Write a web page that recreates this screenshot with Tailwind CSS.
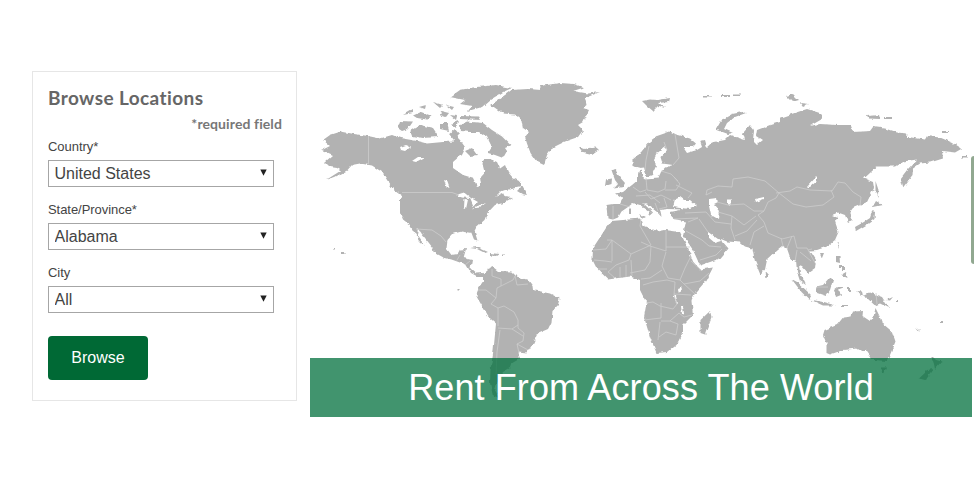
<!DOCTYPE html>
<html lang="en">
<head>
  <meta charset="UTF-8">
  <meta name="viewport" content="width=device-width, initial-scale=1.0">
  <title>Browse Locations</title>
  <script src="https://cdn.jsdelivr.net/npm/@tailwindcss/browser@4"></script>
</head>
<body class="bg-white h-[500px] overflow-hidden relative font-['Liberation_Sans',sans-serif] text-[#444]">

  <main class="flex items-start pl-8 pt-[71px]">

    <!-- Search form -->
    <form class="w-[265px] h-[330px] shrink-0 border border-[#e6e6e6] pl-[15px] pr-[14px] pt-[15px]">
      <h2 class="font-['Lato',sans-serif] font-bold text-[19px] leading-[22px] tracking-[0.4px] text-[#666] whitespace-nowrap">Browse Locations</h2>
      <p class="font-['Lato',sans-serif] font-bold text-[14px] leading-[18px] tracking-[0.1px] mt-1.5 text-right text-[#777]">*required field</p>

      <label for="country" class="block text-[13px] leading-4 tracking-[-0.05px] mt-[6px]">Country*</label>
      <div class="relative w-[226px] mt-[5px]">
        <select id="country" class="block appearance-none w-full h-[27px] border border-[#a6a6a6] bg-white pl-[5.5px] text-base leading-[25px]">
          <option>United States</option>
        </select>
        <svg class="absolute right-[7px] top-[9px]" width="7" height="7" viewBox="0 0 7 7" fill="#222"><path d="M0.3 0.5h6.4L3.5 6.8z"/></svg>
      </div>

      <label for="state" class="block text-[13px] leading-4 tracking-[-0.05px] mt-[15px]">State/Province*</label>
      <div class="relative w-[226px] mt-[5px]">
        <select id="state" class="block appearance-none w-full h-[27px] border border-[#a6a6a6] bg-white pl-[5.5px] text-base leading-[25px]">
          <option>Alabama</option>
        </select>
        <svg class="absolute right-[7px] top-[9px]" width="7" height="7" viewBox="0 0 7 7" fill="#222"><path d="M0.3 0.5h6.4L3.5 6.8z"/></svg>
      </div>

      <label for="city" class="block text-[13px] leading-4 tracking-[-0.05px] mt-[15px]">City</label>
      <div class="relative w-[226px] mt-[5px]">
        <select id="city" class="block appearance-none w-full h-[27px] border border-[#a6a6a6] bg-white pl-[5.5px] text-base leading-[25px]">
          <option>All</option>
        </select>
        <svg class="absolute right-[7px] top-[9px]" width="7" height="7" viewBox="0 0 7 7" fill="#222"><path d="M0.3 0.5h6.4L3.5 6.8z"/></svg>
      </div>

      <button type="button" class="block mt-[23px] w-[100px] h-11 rounded-[4px] bg-[#006935] text-white text-base">Browse</button>
    </form>

    <!-- World map with banner -->
    <section class="relative ml-[13px] w-[664px] h-[346px] shrink-0">
      <svg class="block" width="664" height="346" viewBox="310 71 664 346">
        <defs>
          <filter id="coast" filterUnits="userSpaceOnUse" x="310" y="71" width="664" height="346" color-interpolation-filters="sRGB">
            <feTurbulence type="fractalNoise" baseFrequency="0.2" numOctaves="2" seed="4"/>
            <feDisplacementMap in="SourceGraphic" scale="3.5" xChannelSelector="R" yChannelSelector="G"/>
            <feGaussianBlur stdDeviation="0.3"/>
          </filter>
        </defs>

        <g fill="#b2b2b2" filter="url(#coast)">
          <!-- North America -->
          <path d="M323 140L330 135 341 131.500 354 134 368 136 380 138.500 392 135 400 138 417 141 427 143.500 443 142 455 141.500 455 135 460 140 465 147 461 155 453 162 453 168 463 175 473 178 477 186 481 185 480 177 484.500 172 482.500 164 483.500 159 490 159 497 162 500 168.500 505 165 508 172 513 178 521 182 521 187 512 189 501 191 495 197 503 193 505 197 512 198 503 203 495 205 487 213.500 484.500 220 476.500 227 474.500 231 477.500 240.500 474 239.500 471.500 233 462 231.500 453.500 233.500 447.500 240 446.500 248.500 451.500 255 457.500 254 460 249.500 466 249 463.500 258 472 260 470.500 268.500 476 273.500 483 273 483 276 476.500 276 471 273 466.500 265 458.500 262 451.500 259.500 443.500 257.500 433.500 252 432.500 247.500 418 229 417 235 425 246 419 241 412.500 229.500 410 225 403 219.500 400 212 400 200 401.500 195 392.500 188.500 388 181.500 382 172 372 165.500 360 163.500 352 165 347 170.500 335 177 326 180 341 170.500 337 168 330 167 325 162 333 155 322 150 330 146z"/>
          <path d="M450 97L460 90 473 87.500 496 85 512 88 503 92 490 100 482 107 468 111 472 106 460 104 465 100z"/>
          <path d="M460 116L478 116.500 480 120 460 119zM460 125L467 121.500 483 123 492 130 502 136.500 511 145.500 505 148 507 151 503 158 495 155 488 153 492 147 487 137 480 132 470 132 461 131zM465 151L472 148 477 155 470 156z"/>
          <path d="M410 131L420 125 433 128 439 137 423 138 412 136zM397.500 128L400 121 413 121.500 408 129 402 131z"/>
          <path d="M403 115L413 109 413 113zM413 115.500L421 112 432 116 427 119.500 417 118zM419 107L426 105 425 109zM433 102L443 105 440 108zM440 123L447 123 449 131 440 129zM451 124L458 121 456 128zM449 134L455 129 459 134 454 140zM441 111L449 113 446 117 440 115zM446 105L454 107 452 110zM450 115L457 116 456 120z"/>
          <path d="M517 191L522 186 527 195 522 194z"/>
          <!-- Greenland, Iceland -->
          <path d="M491 105L505 95 511.500 90 528 89 541 90 540 86 560 83 574 84 584 87.500 573 91 588 93.500 600 92 585 98 586.500 105 583 108 589 110 586 116 583 122 578 125 583 130 578 137 565 141.500 552 148 547 155 544 165 536.500 161.500 530.500 153 527 143.500 525 137 529 132 523 128 521.500 120 515 114.500 503 113.500z"/>
          <path d="M579 147L585 149 595 146.500 599 150 592 155 583 153z"/>
          <!-- Caribbean -->
          <path d="M470 248L477 247 488 252 485 253 477 249zM490 253L499 254 496 256 490 255.500zM502 254.500h3v1.500h-3z"/>
          <!-- South America -->
          <path d="M483 273.500L488 269 493 267 498 271 511.500 271.500 516.500 276.500 528 280 532.500 286 533 290 550 293.500 559.500 298.500 558 305 552.500 311 551.500 322 548 329 537.500 333.500 533 343.500 526.500 353.500 518.500 352.500 520 358.500 511.500 363.500 510 368 503 372 500 378 497 383 495 390 499 398 493 396 490 383 490.500 370 493.500 350 496 323.500 488 316.500 481.500 305 476.500 296.500 478 288.500 483 281.500z"/>
          <!-- Eurasia -->
          <path d="M607.500 218.500L606.500 205 613 204 620 204 623 198 616 193.500 623 192 632 185 638 180 638 173.500 642 170.500 642 177 645 179.500 658 178.500 661 172 665 167.500 673 165 662.500 163.500 660.500 157 667.500 149.500 665 147 658 152.500 654 160 656 166 652 175 647 177 644 167.500 640 168 632.500 166 632.500 159.500 640 153.500 649.500 141.500 657 136 670 131.500 677.500 135 690 138.500 696 143.500 693 147 683 147 687 153 697 150 702 147 700 141 705 140 707 147 712 142.500 725 140 730 135 745 140 743 133 750 125 754 130 753 140 757 144 762 140 756 136 757 130 770 125 780 122 780 118 793 113.500 807 109 823 114 823 118.500 810 126 820 124 837 125 850 125 853 132 870 131 873 127 885 128.500 897 132.500 907 133.500 908 137 925 139.500 927 136 940 137.500 952 142.500 962 148.500 955 152.500 942 151 943 158.500 930 162.500 920 163.500 913 168.500 912.500 175 903 187.500 900.500 178.500 907 170 917 159.500 903 161.500 895 166.500 877 166.500 864 178.500 873 182 874 188 867 202 853 208 850 212 853 220 848 223 845 215 838 212.500 832 215 839 218 835 221.500 838.500 232 835 240 827 246.500 817 250 810 250.500 816 260 815 268 808 273 802 266 799 265 800 273 806 285 800 281 797 272 796 260 791 260 787 248.500 783 246 778 250 767 260 765 269.500 760.500 275 755 261.500 752.500 248.500 745 246.500 740 242.500 727 241.500 722 239.500 718 239 708 232 708 237 715 243 722 241 728.500 248.500 720 258.500 700 265.500 693 250 683 235 686 221.500 672 218.500 670.500 212 683 209.500 668 209 660 210 661.500 217 657 212 648 205 643 203 653 212.500 648 217 650 212 640 205 633 203 628 207 621.500 211.500 618 217.500 613 219.500z"/>
          <path d="M611.500 170L616 169 617.500 174 621 178.500 625 183 623 187 614 188.500 618 184 615 180zM605 186L606 179.500 612 178.500 611.500 184z"/>
          <path d="M642 101L650 99.500 658 100 670 98 669 102 659 103 665 108 658 106 653 111 647 106zM716 129.500L721.500 120 732 114 745 111.500 746 113 735 117 727 123 724 129 733 133 728 134z"/>
          <path d="M704 96h8v1.500h-8zM721 95h9v2h-9zM733 94.500h8v1.500h-8zM786 96L793 94 799 100 792 102zM800 103L809 104 803 107zM867 116L879 115 880 119 868 118.500zM884 117h7v2h-7zM942 131h6v2h-6zM962 156h6v1.500h-6zM629 208.500h2v5h-2zM639 214L645 217 642 218z"/>
          <!-- Africa, Madagascar -->
          <path d="M611.500 221L623 220 640 218.500 642.500 225 658 231.500 665 230 680 232 688 248.500 693 261.500 700 269.500 713 267.500 706.500 280 695 293.500 691.500 300 693 315 683 325 683 332 676.500 345 668 352 656.500 353 650 337 644 317 646.500 303 640 290 640 280 630 276.500 608 279.500 596.500 268 592.500 260 593 248 601.500 235 606 228z"/>
          <path d="M710 311L711.500 317 705 334.500 700.500 333 700.500 320z"/>
          <!-- East Asia and islands -->
          <path d="M855 227L863 222.500 870 218 872.500 210 875 212 874.500 219 867 224.500 856 231zM872.500 207L876 201 882 205zM875.500 181L878.500 190 877.500 198 875.500 192zM837 243l2-1-2 6zM820 253l4 0-2 5zM765.500 272L769 276 766.500 279z"/>
          <path d="M791.500 279L798 282.500 811 295 809.500 300 801.500 292zM810 299.500L823 302 836 305.500 823 305.500zM816 286.500L823 285 830 277 833 280 830 290 826 296 817 293zM834 290L838 287 845 287 838 289.500 841 295 836 297zM856 291L862 291.500 863 296 870 292.500 882 297 889 308 880 303.500 875 305.500 867 298zM836 256L839.500 256 840 263 836 262zM841 275L846 272 847.500 278zM839 265h3v3h-3zM843 266h2v4h-2zM848 288h2v4h-2zM841 305h6v2h-6zM886 300L893 297 890 300.500zM896 300h3v2h-3z"/>
          <!-- Oceania -->
          <path d="M824.500 330L837 325 843 317.500 851.500 316.500 853 311.500 863 311 862.500 316 870 321 873 319 875.500 308 879 315 882 323 892 331.500 895.500 341.500 890 355 887 361 873 360 866 350.500 863 352 857 348.500 843 350 830 354.500 826.500 353 826.500 343.500 823 335zM880.500 367.500L886 367.500 884 373.500zM931 355L936 360 941.500 361.500 935 369 934 364zM919 378.500L928 370 933 369 925 380z"/>
          <path d="M916 327l4 3-1 .5zM940 321h2v2h-2zM333 248h2v1.500h-2zM342 252h2.500v2h-2.500zM457.500 289h2v1.500h-2z"/>
        </g>

        <!-- Lakes and inland seas -->
        <g fill="#fff" filter="url(#coast)">
          <path d="M400 147L406 145 411 147 405 151 401 150zM412 161L418 157 425 157 416 162zM444 180L447 181 449.500 188 446.500 187z"/>
          <path d="M456 195L464 192.500 471 198 462 197.500zM464.500 199L468 199.500 466 209 464 208zM470 197.500L478 202 473.500 206zM472 208.500L480 205 486 203 480 207.500z"/>
          <path d="M673 207L675 199 680 197 684 200 690 200 697 206 690 209 680 208zM709 199L717 198 718 203 714 205 719 211 718 219 711 215 709 206zM727 199.500h4v5h-4zM755 199L764 197 764 199 756 202zM678 289L682 287.500 683 290.500 679 292.500zM807 187L817 176 817 181 810 187z"/>
          <path d="M674 295l2 0 2 9-2-1zM681 306l2 0 1 9-2-1z"/>
        </g>

        <!-- Country borders -->
        <g fill="none" stroke="#cdcdcd" stroke-width="0.8" stroke-linejoin="round">
          <path d="M368.500 136V164M402 192.500H452L459 195M416 229L432 230 441 236 446 242M457 260L460 255M465 265L470 261"/>
          <path d="M492 269L492 276 501 279 501 286 497 288 496 298 491 304 498 308 504 306 514 312 518 320 518 328 524 333 523 341 517 344 519 353M501 286L513 280 515 276M515 276L517 285 528 284M478 290L486 290 496 298M498 308L498 326M498 328L512 329 518 325M512 329L523 336M500 330L497 352 496 375M517 344L528 350"/>
          <path d="M646 178L647 190 658 192 665 189 666 181M674 177L680 184 676 190 665 190M676 185L692 193 688 198M661 171L671 174 678 181M633 187L640 192 646 190M636 196L650 195 660 203M645 192L651 199 661 195 671 200M620 204L630 207M649 146L646 160 645 170M664 142L667 150M675 134L679 158 673 165M664 198L667 207 659 209M655 203L658 211M613 206L613 219"/>
          <path d="M712 192L706 195 707 190 718 186 732 187 733 179 748 177 765 181 779 193 776 198 768 202 764 211 754 211 744 204 728 205 717 202"/>
          <path d="M776 193L790 191 797 187 810 190 832 191 838 182 845 183 853 192 861 197 860 206M779 193L793 204 806 207 823 205 834 197 831 190M764 211L758 215 764 222 768 233 782 239 794 236M718 212L732 216 744 225 756 216M732 216L731 228 735 240M735 236L747 231 757 220M750 245L754 232 764 226M783 246L781 238M787 248L792 236M794 236L797 248 807 248 815 263M797 250L795 262M800 252L811 261M812 249L808 250"/>
          <path d="M685 213L706 212 715 222 731 224M699 219L708 232M688 222L698 218M686 231L702 240 709 246 721 247M700 260L716 255 722 249M674 219L698 218"/>
          <path d="M607 240L612 240 631 254 651 245 640 226 641 219M612 240V261M593 250L606 249 612 240M631 254L629 260 616 265 608 272M641 242L650 246 666 251V231M666 247H690M651 246L650 262 645 270 630 273M666 252L662 266 668 278 680 280 685 268 691 256M662 270L650 278 641 279M653 282L667 280 675 282 674 295 677 304 673 309 660 306 653 302 646 303M680 280L684 284 700 281 709 273M691 261L701 270M661 303V318L644 320M661 321H670L679 313 684 317 692 315M660 322L658 340M659 337L666 332 676 335 678 324 670 321M608 272L615 278M620 267V278M626 265V277M631 260L632 276M674 294L691 295M684 284L695 294M643 285L653 282M594 260L605 261 612 262M598 269L607 269"/>
          <path d="M876 293L877 304M818 287L828 287"/>
        </g>
      </svg>

      <div class="absolute left-0 bottom-0 w-[662px] h-[59px] bg-[#01703e]/75 flex items-center justify-center">
        <h1 class="text-white text-[36px] leading-none tracking-[0.11px] whitespace-nowrap">Rent From Across The World</h1>
      </div>
    </section>
  </main>

  <!-- Side tab at the window edge -->
  <div class="absolute right-0 top-[156px] w-[3px] h-[108px] rounded-l-[3px] bg-[#91a890]"></div>

</body>
</html>
